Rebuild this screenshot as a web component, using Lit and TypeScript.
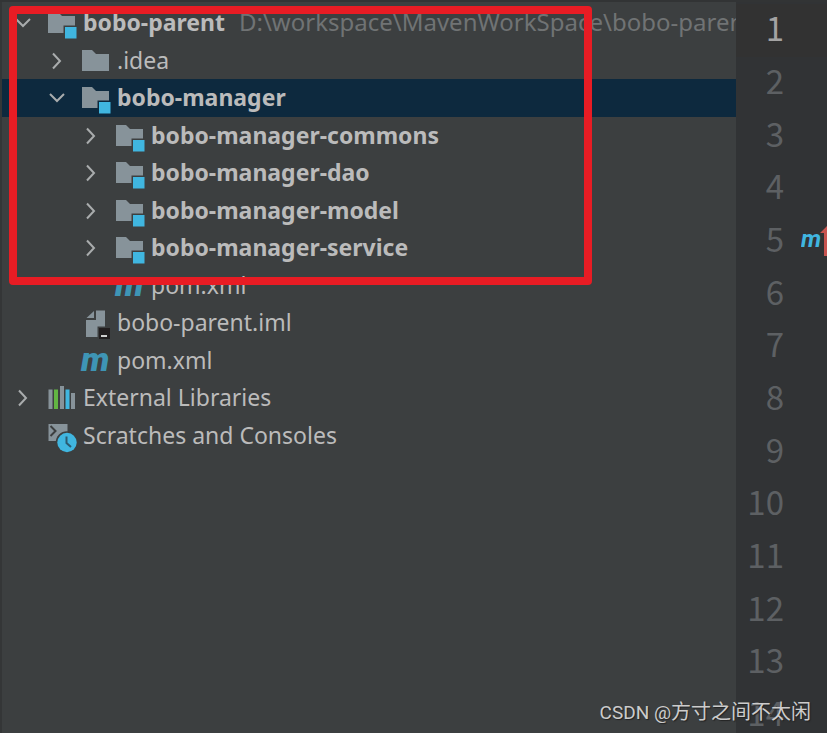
import { LitElement, html, svg, css, nothing } from "lit";
import { customElement, state } from "lit/decorators.js";
import { classMap } from "lit/directives/class-map.js";

type IconName = "folder" | "module" | "maven" | "iml" | "libraries" | "scratches";

interface TreeItem {
  label: string;
  level: number;
  icon: IconName;
  open?: boolean;
  bold?: boolean;
  path?: string;
}

const items: TreeItem[] = [
  { label: "bobo-parent", level: 0, icon: "module", open: true, bold: true, path: "D:\\workspace\\MavenWorkSpace\\bobo-parent" },
  { label: ".idea", level: 1, icon: "folder", open: false },
  { label: "bobo-manager", level: 1, icon: "module", open: true, bold: true },
  { label: "bobo-manager-commons", level: 2, icon: "module", open: false, bold: true },
  { label: "bobo-manager-dao", level: 2, icon: "module", open: false, bold: true },
  { label: "bobo-manager-model", level: 2, icon: "module", open: false, bold: true },
  { label: "bobo-manager-service", level: 2, icon: "module", open: false, bold: true },
  { label: "pom.xml", level: 2, icon: "maven" },
  { label: "bobo-parent.iml", level: 1, icon: "iml" },
  { label: "pom.xml", level: 1, icon: "maven" },
  { label: "External Libraries", level: 0, icon: "libraries", open: false },
  { label: "Scratches and Consoles", level: 0, icon: "scratches" },
];

const icons = {
  folder: svg`<path fill="#87939a" d="M0 5H10L14 9H27V26H0Z"/>`,
  module: svg`
    <path fill="#87939a" d="M0 5H10L14 9H27V18.500H15.500V26H0Z"/>
    <rect fill="#40b6e0" x="17" y="20" width="11.500" height="11.500"/>`,
  maven: svg`<text class="m" x="-1" y="26">m</text>`,
  iml: svg`
    <path fill="#87939a" d="M14 3.500H23V19.500H15.500V30H4V13H14Z"/>
    <path fill="#87939a" d="M12 4V11H4.500Z"/>
    <rect fill="#231f20" x="17" y="21" width="11" height="11"/>
    <rect fill="#d0d0d0" x="19" y="28" width="6" height="2"/>`,
  libraries: svg`
    <g fill="#87939a">
      <rect x="0.500" y="7.500" width="4" height="19.500"/>
      <rect x="12" y="4" width="4" height="23"/>
      <rect x="23" y="11" width="4" height="16"/>
    </g>
    <rect fill="#62b543" x="6" y="7.500" width="4" height="19.500"/>
    <rect fill="#40b6e0" x="17.500" y="7.500" width="4" height="19.500"/>`,
  scratches: svg`
    <path fill="#87939a" d="M0.500 4H19.500V21H0.500Z"/>
    <path fill="none" stroke="#3c3f40" stroke-width="2" d="M2.500 6L7.500 11L2.500 16"/>
    <circle fill="#3c3f40" cx="19" cy="22.500" r="11.300"/>
    <circle fill="#40b6e0" cx="19" cy="22.500" r="9.700"/>
    <path fill="none" stroke="#2c5a70" stroke-width="2" d="M18.500 16.500V23L23 27"/>`,
};

@customElement("project-tree")
export class ProjectTree extends LitElement {
  @state() private selected = 2;

  static styles = css`
    :host {
      display: block;
      min-width: 0;
      overflow: hidden;
      color: #bbbbbb;
      font: 23px/36px "Noto Sans", "Open Sans", sans-serif;
    }
    .tree {
      margin: 0;
      padding: 2px 0 0;
      list-style: none;
    }
    .row {
      display: flex;
      align-items: center;
      height: 38px;
      white-space: nowrap;
    }
    .row:nth-child(even) {
      height: 37px;
    }
    .selected {
      background: #0d293e;
    }
    .level0 { padding-left: 12px; }
    .level1 { padding-left: 46px; }
    .level2 { padding-left: 80px; }
    .toggle {
      flex: none;
      display: flex;
      width: 18px;
      height: 18px;
      margin-right: 16px;
      padding: 0;
      border: 0;
      background: none;
    }
    .chevron {
      width: 18px;
      height: 18px;
      fill: none;
      stroke: #a9acad;
      stroke-width: 2;
    }
    .icon {
      flex: none;
      width: 32px;
      height: 32px;
      margin-right: 3px;
      overflow: visible;
    }
    .m {
      fill: #3e95b5;
      font: italic 900 34px Roboto, sans-serif;
    }
    .label {
      line-height: 34px;
      padding-bottom: 2px;
    }
    .bold {
      font-weight: 700;
    }
    .path {
      margin-left: 14px;
      padding-bottom: 2px;
      color: #707374;
      font-size: 24px;
      line-height: 34px;
    }
  `;

  private row(item: TreeItem, index: number) {
    const hasChildren = item.open !== undefined;
    return html`
      <li
        class=${classMap({ row: true, selected: index === this.selected, [`level${item.level}`]: true })}
        role="treeitem"
        aria-level=${item.level + 1}
        aria-selected=${index === this.selected}
        aria-expanded=${hasChildren ? String(item.open) : nothing}
        @click=${() => (this.selected = index)}
      >
        ${hasChildren
          ? html`<button class="toggle" type="button" aria-label="Toggle ${item.label}">
              <svg class="chevron" viewBox="0 0 18 18" aria-hidden="true">
                <path d=${item.open ? "M2 5L9 12L16 5" : "M5 1.500L12 9L5 16.500"} />
              </svg>
            </button>`
          : html`<span class="toggle"></span>`}
        <svg class="icon" viewBox="0 0 32 32" aria-hidden="true">${icons[item.icon]}</svg>
        <span class=${classMap({ label: true, bold: !!item.bold })}>${item.label}</span>
        ${item.path ? html`<span class="path">${item.path}</span>` : nothing}
      </li>
    `;
  }

  render() {
    return html`<ul class="tree" role="tree" aria-label="Project">${items.map((item, i) => this.row(item, i))}</ul>`;
  }
}

@customElement("editor-gutter")
export class EditorGutter extends LitElement {
  static styles = css`
    :host {
      display: block;
      overflow: hidden;
      background: #313335;
      color: #5d6063;
      font: 33px/46px "Noto Sans CJK SC", sans-serif;
    }
    .lines {
      margin: 0;
      padding: 2px 0 0;
      list-style: none;
    }
    .line {
      display: grid;
      grid-template-columns: 48px 1fr;
      align-items: start;
      column-gap: 17px;
      height: 53px;
      text-align: right;
    }
    .line:nth-child(3n) {
      height: 52px;
    }
    .current {
      background: #323232;
      color: #a4a3a3;
    }
    .marker {
      align-self: center;
      width: 26px;
      height: 36px;
    }
    .m {
      fill: #40b6e0;
      font: italic 700 24px Roboto, sans-serif;
    }
  `;

  render() {
    return html`
      <ol class="lines">
        ${Array.from({ length: 14 }, (_, i) => i + 1).map(
          (n) => html`
            <li class=${classMap({ line: true, current: n === 1 })}>
              <span>${n}</span>
              ${n === 5
                ? html`<svg class="marker" viewBox="0 0 26 36" role="img" aria-label="Overrides parent">
                    <text class="m" x="0" y="23">m</text>
                    <path fill="#c75450" d="M19 9L28 0V32H23V9Z" />
                  </svg>`
                : nothing}
            </li>
          `
        )}
      </ol>
    `;
  }
}

@customElement("app-root")
export class AppRoot extends LitElement {
  static styles = css`
    :host {
      display: grid;
      grid-template-columns: minmax(0, 1fr) 91px;
      position: relative;
      box-sizing: border-box;
      height: 100vh;
      overflow: hidden;
      border-top: 2px solid #323435;
      background: #3c3f40;
    }
    .tree {
      border-left: 2px solid #343637;
    }
    .highlight {
      position: absolute;
      top: 4px;
      left: 9px;
      box-sizing: border-box;
      width: 583px;
      height: 279px;
      border: 8px solid #e81c24;
      border-radius: 4px;
      pointer-events: none;
    }
    .watermark {
      position: absolute;
      right: 16px;
      bottom: 4px;
      color: #cccccc;
      font: 20px/32px Roboto, "Noto Sans CJK SC", sans-serif;
      text-shadow: 1px 1px 1px #222222;
      white-space: nowrap;
    }
    .site {
      font-size: 19px;
    }
  `;

  render() {
    return html`
      <project-tree class="tree"></project-tree>
      <editor-gutter></editor-gutter>
      <div class="highlight"></div>
      <div class="watermark"><span class="site">CSDN @</span>方寸之间不太闲</div>
    `;
  }
}
